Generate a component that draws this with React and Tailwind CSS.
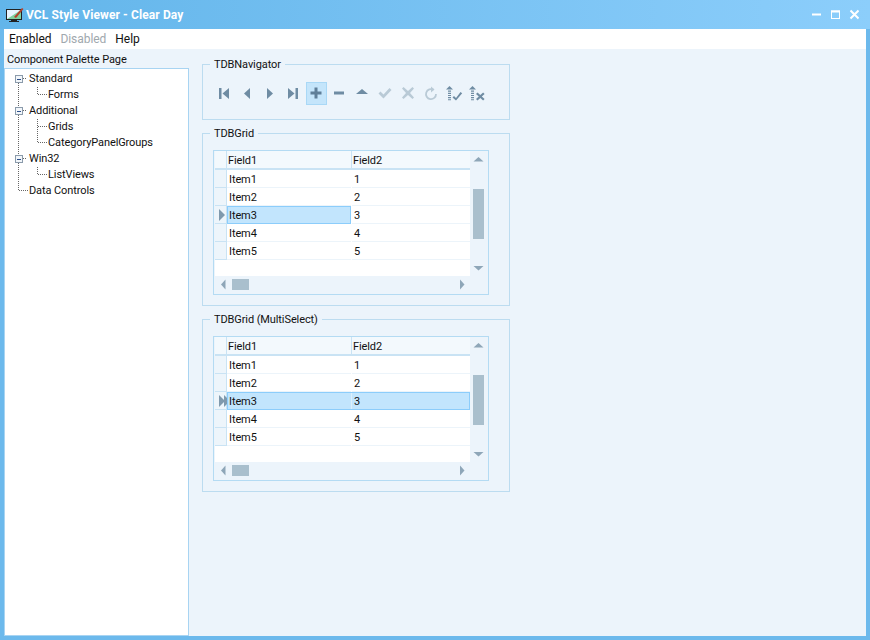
import React from "react";

const ROWS = ["1", "2", "3", "4", "5"];
const DARK = "#6f8ca3";
const FADE = "#b9cad6";

// navigator glyphs, all in a 16x16 box
const NAV = [
  { color: DARK, d: "M3 3h2.5v11H3z M13 3v11L6.5 8.5z" },
  { color: DARK, d: "M11 3v11L5 8.5z" },
  { color: DARK, d: "M5 3v11l6-5.5z" },
  { color: DARK, d: "M3 3v11l6.5-5.5z M10.5 3H13v11h-2.5z" },
  { color: "#5f7f99", d: "M6.5 2.5h3v4h4v3h-4v4h-3v-4h-4v-3h4z", active: true },
  { color: DARK, d: "M3 6.5h10v3H3z" },
  { color: DARK, d: "M8 4l6 5H2z" },
  { color: FADE, d: "M1.5 8.5l2-2 3 3L12.5 3l2 2-8 8.5z" },
  { color: FADE, d: "M3.5 2L8 6l4.5-4L14 3.5 10 8l4 4.5-1.5 1.5L8 10l-4.5 4L2 12.5 6 8 2 3.5z" },
  { color: FADE, refresh: true },
  { color: DARK, post: true, d: "M8 11l2 2 4.5-6 1.7 1.3L10 15.5 6.5 12.4z" },
  { color: DARK, post: true, d: "M8.5 7.5l2.8 2.4 2.8-2.4 1.5 1.5-2.8 2.5 2.8 2.5-1.5 1.5-2.8-2.4-2.8 2.4-1.5-1.5 2.8-2.5-2.8-2.5z" },
];

function NavButton({ item }) {
  return (
    <div className="w-[23px] h-[23px] flex justify-center">
      <div className={`w-[21px] h-[23px] flex items-center justify-center ${item.active ? "bg-[#c4e5fb] border border-[#a9d8f6]" : ""}`}>
        <svg width="17" height="17" viewBox="0 0 17 17" className="shrink-0">
          {item.refresh ? (
            <g fill="none" stroke={item.color} strokeWidth="1.8">
              <path d="M10.5 4.8A5 5 0 1 0 13 9" />
              <path d="M8 1.5v6l3.5-3z" fill={item.color} stroke="none" />
            </g>
          ) : (
            <path d={item.d} fill={item.color} />
          )}
          {item.post && (
            <g fill={item.color}>
              <path d="M3.5 1L7 4.5H0z" />
              <path d="M2 5.5h3v1.2H2zM2 7.7h3v1.2H2zM2 9.9h3v1.2H2zM2 12.1h3v1.2H2zM2 14.3h3v1H2z" />
            </g>
          )}
        </svg>
      </div>
    </div>
  );
}

function Group({ title, className, children }) {
  return (
    <div className={`relative border border-[#bcdcf0] ${className}`}>
      <span className="absolute -top-[8px] left-[7px] bg-[#ecf4fb] px-[4px] leading-[16px]">{title}</span>
      {children}
    </div>
  );
}

function Arrow({ dir }) {
  const d = { up: "M0.5 5.5L5.5 1l5 4.5z", down: "M0.5 1l5 4.5 5-4.5z", left: "M5.5 0.5L1 5.5l4.5 5z", right: "M1 0.5l4.5 5-4.5 5z" }[dir];
  return (
    <svg width="11" height="11" viewBox="0 0 11 11" className="shrink-0">
      <path d={d} fill="#8ea6b8" />
    </svg>
  );
}

function Grid({ multi }) {
  return (
    <div className="w-[276px] h-[145px] border border-[#b4dbf3] flex flex-col bg-[#ecf4fb] px-px pb-px">
      <div className="flex h-[125px]">
        <div className="w-[255px] flex flex-col bg-white">
          <div className="flex h-[19px] bg-[#f3f9fd] border-b-2 border-[#c9e3f4]">
            <div className="w-[12px] border-r border-[#c9e3f4]" />
            <div className="w-[125px] pl-px border-r border-[#c9e3f4] leading-[19px]">Field1</div>
            <div className="flex-1 pl-px leading-[19px]">Field2</div>
          </div>
          {ROWS.map((r, i) => {
            const current = i === 2;
            return (
              <div key={r} className="flex h-[18px]">
                <div className="w-[12px] bg-[#edf5fb] border-r border-b border-[#c9e3f4] flex items-center pl-[4px]">
                  {current && (
                    <svg width={multi ? 12 : 6} height="12" viewBox={multi ? "0 0 12 12" : "0 0 6 12"} className="shrink-0">
                      <path d="M0 0l6 6-6 6z" fill="#7f99ad" />
                      {multi && <path d="M5 0l6 6-6 6z" fill="#7f99ad" />}
                    </svg>
                  )}
                </div>
                {current && multi ? (
                  <div className="flex-1 flex bg-[#c2e5fd] border border-[#8ccdfb]">
                    <div className="w-[124px] pl-px border-r border-[#ddeffb] leading-[18px]">Item{r}</div>
                    <div className="flex-1 pl-[2px] leading-[18px]">{r}</div>
                  </div>
                ) : (
                  <>
                    <div className={`w-[124px] mr-px ${current ? "bg-[#c2e5fd] border border-[#8ccdfb] pl-px leading-[18px]" : "pl-[2px] border-b border-[#ecf4fa] leading-[20px]"}`}>Item{r}</div>
                    <div className="flex-1 pl-[2px] border-b border-[#ecf4fa] leading-[20px]">{r}</div>
                  </>
                )}
              </div>
            );
          })}
        </div>
        <div className="w-[17px] flex flex-col items-center pt-[5px]">
          <Arrow dir="up" />
          <div className="w-[11px] h-[50px] bg-[#a9bfcd] mt-[22px]" />
          <div className="flex-1" />
          <Arrow dir="down" />
        </div>
      </div>
      <div className="flex-1 flex items-center pl-[5px] pr-[17px]">
        <Arrow dir="left" />
        <div className="w-[17px] h-[11px] bg-[#a9bfcd] ml-[1px]" />
        <div className="flex-1" />
        <Arrow dir="right" />
      </div>
    </div>
  );
}

function TreeRow({ level, children }) {
  return <div className={`h-[16px] leading-[18px] ${level === 1 ? "pl-[43px]" : "pl-[24px]"}`}>{children}</div>;
}

function TreeLines() {
  const boxes = [74, 106, 154];
  return (
    <svg className="absolute left-0 top-0" width="60" height="130" viewBox="0 0 60 130" shapeRendering="crispEdges">
      <g stroke="#666" strokeDasharray="1 1" fill="none">
        <path d="M13.5 6v116M14 121.5h9" />
        <path d="M18 9.5h4M18 41.5h4M18 89.5h4" />
        <path d="M32.5 18v8M33 25.5h9" />
        <path d="M32.5 50v24M33 57.5h9M33 73.5h9" />
        <path d="M32.5 98v8M33 105.5h9" />
      </g>
      {boxes.map((y) => (
        <g key={y} transform={`translate(10 ${y - 68})`}>
          <rect x="0.5" y="0.5" width="7" height="7" fill="#f2f6fa" stroke="#8b9bab" />
          <path d="M2 4.5h4" stroke="#2c4f8a" />
        </g>
      ))}
    </svg>
  );
}

export default function App() {
  return (
    <div className="w-[870px] h-[640px] flex flex-col overflow-hidden bg-[#6cb9ec] text-[11px] tracking-[-0.1px] text-[#111] font-['Roboto','Liberation_Sans',sans-serif]">
      {/* title bar */}
      <div className="h-[29px] shrink-0 flex items-center bg-gradient-to-r from-[#62b5ea] to-[#8ccefb] pl-[6px] pr-[11px] text-white">
        <svg width="18" height="16" viewBox="0 0 18 16" className="shrink-0">
          <rect x="0.5" y="2.5" width="15" height="10" fill="#7fd0a0" stroke="#222" />
          <path d="M1 3h14L1 12z" fill="#e8f4ff" />
          <path d="M8 10L16 1l1.5 1L10 11z" fill="#b3402a" />
          <rect x="5" y="13" width="6" height="1" fill="#222" />
          <rect x="3" y="14" width="10" height="1" fill="#222" />
        </svg>
        <span className="ml-[2px] font-bold text-[12px] tracking-[0.1px]">VCL Style Viewer - Clear Day</span>
        <div className="flex-1" />
        <svg width="47" height="12" viewBox="0 0 47 12" fill="none" stroke="#fff">
          <path d="M0 5.5h9" strokeWidth="2" />
          <rect x="19.5" y="2" width="8" height="7.5" strokeWidth="1" />
          <path d="M19 2.5h9" strokeWidth="2" />
          <path d="M38.5 1.5l8 8M46.5 1.5l-8 8" strokeWidth="2" />
        </svg>
      </div>

      {/* window body */}
      <div className="flex-1 flex flex-col mx-[4px] mb-[4px] min-h-0 bg-[#ecf4fb]">
        <div className="h-[20px] shrink-0 bg-white flex items-center gap-[9px] pl-[5px] text-[12px] tracking-[-0.05px] leading-[20px]">
          <span>Enabled</span>
          <span className="text-[#a0a8ae]">Disabled</span>
          <span>Help</span>
        </div>
        <div className="flex-1 flex min-h-0">
          <div className="w-[185px] shrink-0 flex flex-col">
            <div className="h-[19px] pl-[3px] leading-[22px] whitespace-nowrap">Component Palette Page</div>
            <div className="relative flex-1 bg-white border border-[#a8d4f2] pt-px">
              <TreeLines />
              <TreeRow>Standard</TreeRow>
              <TreeRow level={1}>Forms</TreeRow>
              <TreeRow>Additional</TreeRow>
              <TreeRow level={1}>Grids</TreeRow>
              <TreeRow level={1}>CategoryPanelGroups</TreeRow>
              <TreeRow>Win32</TreeRow>
              <TreeRow level={1}>ListViews</TreeRow>
              <TreeRow>Data Controls</TreeRow>
            </div>
          </div>
          <div className="flex-1 flex flex-col gap-[13px] pl-[13px] pt-[15px]">
            <Group title="TDBNavigator" className="w-[308px] h-[56px] pl-[10px] pt-[17px]">
              <div className="flex">
                {NAV.map((item, i) => (
                  <NavButton key={i} item={item} />
                ))}
              </div>
            </Group>
            <Group title="TDBGrid" className="w-[308px] h-[173px] pl-[10px] pt-[16px]">
              <Grid />
            </Group>
            <Group title="TDBGrid (MultiSelect)" className="w-[308px] h-[173px] pl-[10px] pt-[16px]">
              <Grid multi />
            </Group>
          </div>
        </div>
      </div>
    </div>
  );
}
